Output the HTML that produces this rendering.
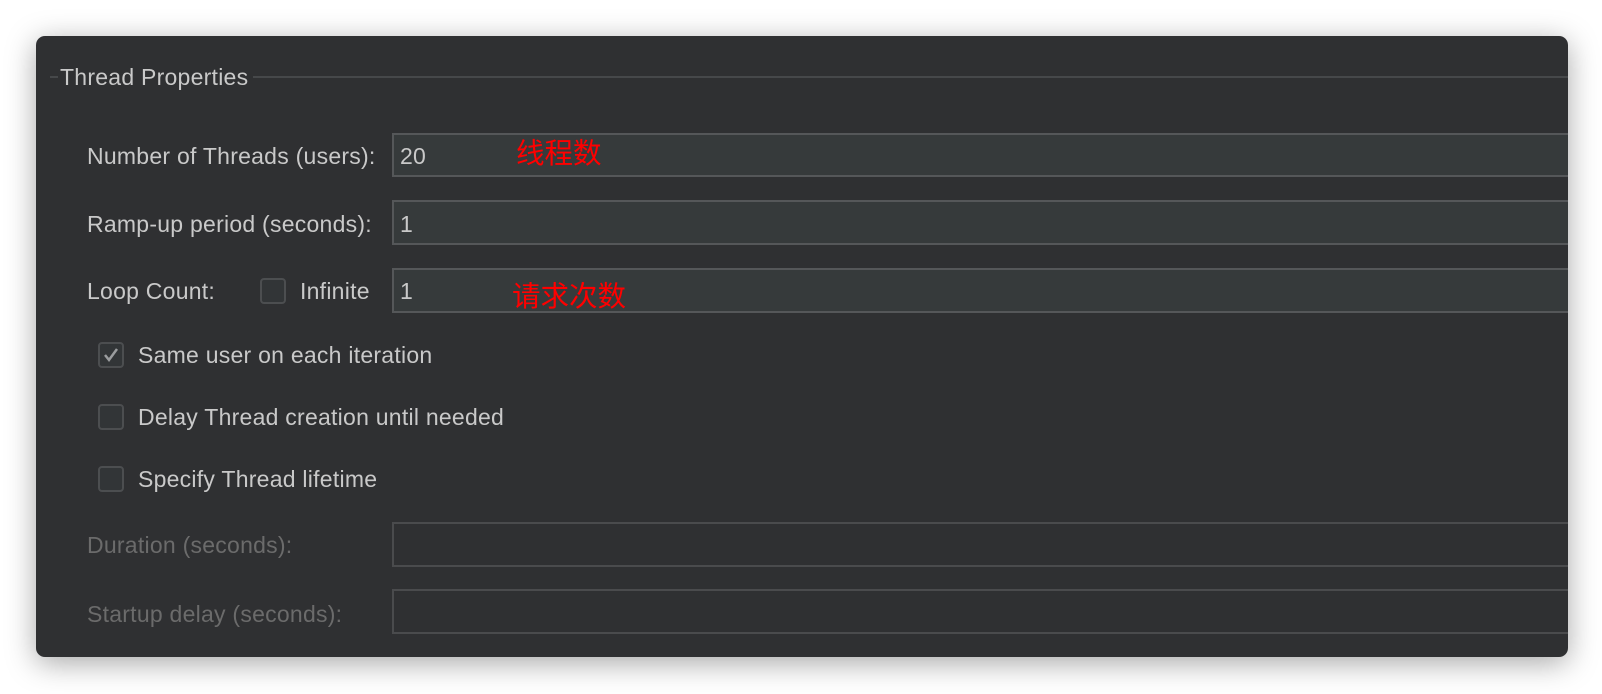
<!DOCTYPE html>
<html><head><meta charset="utf-8"><style>
body{margin:0;width:1602px;height:694px;background:#fff;position:relative;overflow:hidden;font-family:"Liberation Sans","Noto Sans CJK SC",sans-serif;}
.panel{position:absolute;left:36px;top:36px;width:1532px;height:621px;background:#2f3032;border-radius:9px;box-shadow:0 6px 30px rgba(0,0,0,.35);overflow:hidden;}
.t{position:absolute;color:#c9c9c9;font-size:23px;line-height:26px;white-space:nowrap;letter-spacing:0.25px;}
.d{color:#6b6b6b;}
.in{position:absolute;left:356px;width:1200px;background:#363a3b;border:2px solid #555759;box-sizing:border-box;}
.in.dis{background:#2f3032;border-color:#4a4b4d;}
.cb{position:absolute;width:26px;height:26px;box-sizing:border-box;border:2px solid #4c4e50;border-radius:4px;background:#323537;}
.red{position:absolute;color:#f00;font-size:28.5px;line-height:30px;font-family:"Noto Sans CJK SC",sans-serif;}
</style></head><body>
<div class="panel">
<div style="position:absolute;left:14px;top:40px;width:8px;height:2px;background:#46484a"></div>
<div class="t" style="left:24px;top:28px">Thread Properties</div>
<div style="position:absolute;left:217px;top:40px;width:1330px;height:2px;background:#46484a"></div>

<div class="t" style="left:51px;top:107px">Number of Threads (users):</div>
<div class="in" style="top:97px;height:44px"></div>
<div class="t" style="left:364px;top:107px">20</div>
<div class="red" style="left:480px;top:101px">线程数</div>

<div class="t" style="left:51px;top:175px">Ramp-up period (seconds):</div>
<div class="in" style="top:164px;height:45px"></div>
<div class="t" style="left:364px;top:175px">1</div>

<div class="t" style="left:51px;top:242px">Loop Count:</div>
<div class="cb" style="left:224px;top:242px"></div>
<div class="t" style="left:264px;top:242px">Infinite</div>
<div class="in" style="top:232px;height:45px"></div>
<div class="t" style="left:364px;top:242px">1</div>
<div class="red" style="left:476px;top:244px">请求次数</div>

<div class="cb" style="left:62px;top:306px"></div>
<svg style="position:absolute;left:62px;top:306px" width="26" height="26"><path d="M7 13 L11 18 L19 7" stroke="#9a9c9e" stroke-width="2.5" fill="none"/></svg>
<div class="t" style="left:102px;top:306px">Same user on each iteration</div>

<div class="cb" style="left:62px;top:368px"></div>
<div class="t" style="left:102px;top:368px">Delay Thread creation until needed</div>

<div class="cb" style="left:62px;top:430px"></div>
<div class="t" style="left:102px;top:430px">Specify Thread lifetime</div>

<div class="t d" style="left:51px;top:496px">Duration (seconds):</div>
<div class="in dis" style="top:486px;height:45px"></div>
<div class="t d" style="left:51px;top:565px">Startup delay (seconds):</div>
<div class="in dis" style="top:553px;height:45px"></div>
</div>
</body></html>
